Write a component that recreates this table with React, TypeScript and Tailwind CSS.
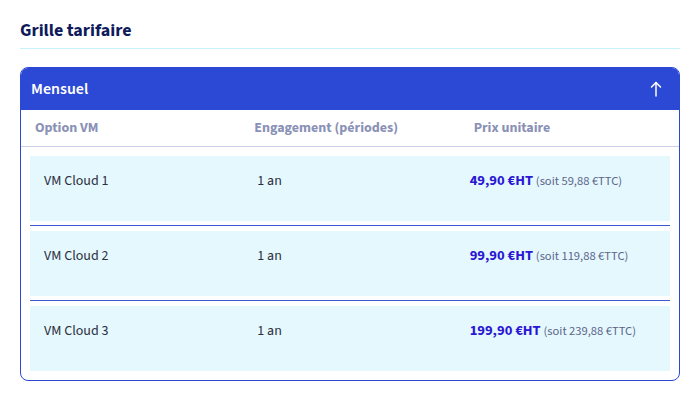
import React from "react";

type Row = { name: string; term: string; ht: string; ttc: string };

const rows: Row[] = [
  { name: "VM Cloud 1", term: "1 an", ht: "49,90 €HT", ttc: "(soit 59,88 €TTC)" },
  { name: "VM Cloud 2", term: "1 an", ht: "99,90 €HT", ttc: "(soit 119,88 €TTC)" },
  { name: "VM Cloud 3", term: "1 an", ht: "199,90 €HT", ttc: "(soit 239,88 €TTC)" },
];

function ArrowUp() {
  return (
    <svg width="12" height="16" viewBox="0 0 12 16" fill="none" stroke="white" strokeWidth="1.5" strokeLinecap="round" strokeLinejoin="round">
      <path d="M6 15V1.5" />
      <path d="M1.5 6L6 1.5L10.5 6" />
    </svg>
  );
}

export default function App() {
  return (
    <div className="min-h-[398px] bg-white pl-5 pr-[10px] pt-[19px] font-['Source_Sans_3','Lato',sans-serif]">
      <h2 className="border-b border-[#c8f2fc] pb-[5px] text-[18px] font-bold leading-6 text-[#0e1a5b]">
        Grille tarifaire
      </h2>

      <div className="mt-[18px] overflow-hidden rounded-lg border border-[#2c49d6]">
        <div className="flex h-[42px] items-center justify-between bg-[#2c49d6] px-[10px]">
          <span className="text-[16px] font-semibold text-white">Mensuel</span>
          <span className="mr-[7px] flex items-center">
            <ArrowUp />
          </span>
        </div>

        <div className="grid h-[37px] grid-cols-3 items-center border-b border-[#c9cfe9] text-[14px] font-bold text-[#8a91b6]">
          <div className="pl-[14px]">Option VM</div>
          <div className="pl-[14px]">Engagement (périodes)</div>
          <div className="pl-[14px]">Prix unitaire</div>
        </div>

        <div className="flex flex-col px-[9px] pb-[9px] pt-[9px]">
          {rows.map((r, i) => (
            <React.Fragment key={r.name}>
              {i > 0 && <div className="mb-[5px] mt-1 h-px bg-[#3d58d3]" />}
              <div className="grid h-[65px] grid-cols-3 bg-[#e4f8fe] pt-[15px] text-[14px] leading-5 text-[#2d2f3d]">
                <div className="pl-[14px]">{r.name}</div>
                <div className="pl-[14px]">{r.term}</div>
                <div className="pl-[13px] whitespace-nowrap">
                  <span className="text-[14.5px] font-bold text-[#2a16d3]">{r.ht}</span>{" "}
                  <span className="text-[12.5px] text-[#5c6489]">{r.ttc}</span>
                </div>
              </div>
            </React.Fragment>
          ))}
        </div>
      </div>
    </div>
  );
}
